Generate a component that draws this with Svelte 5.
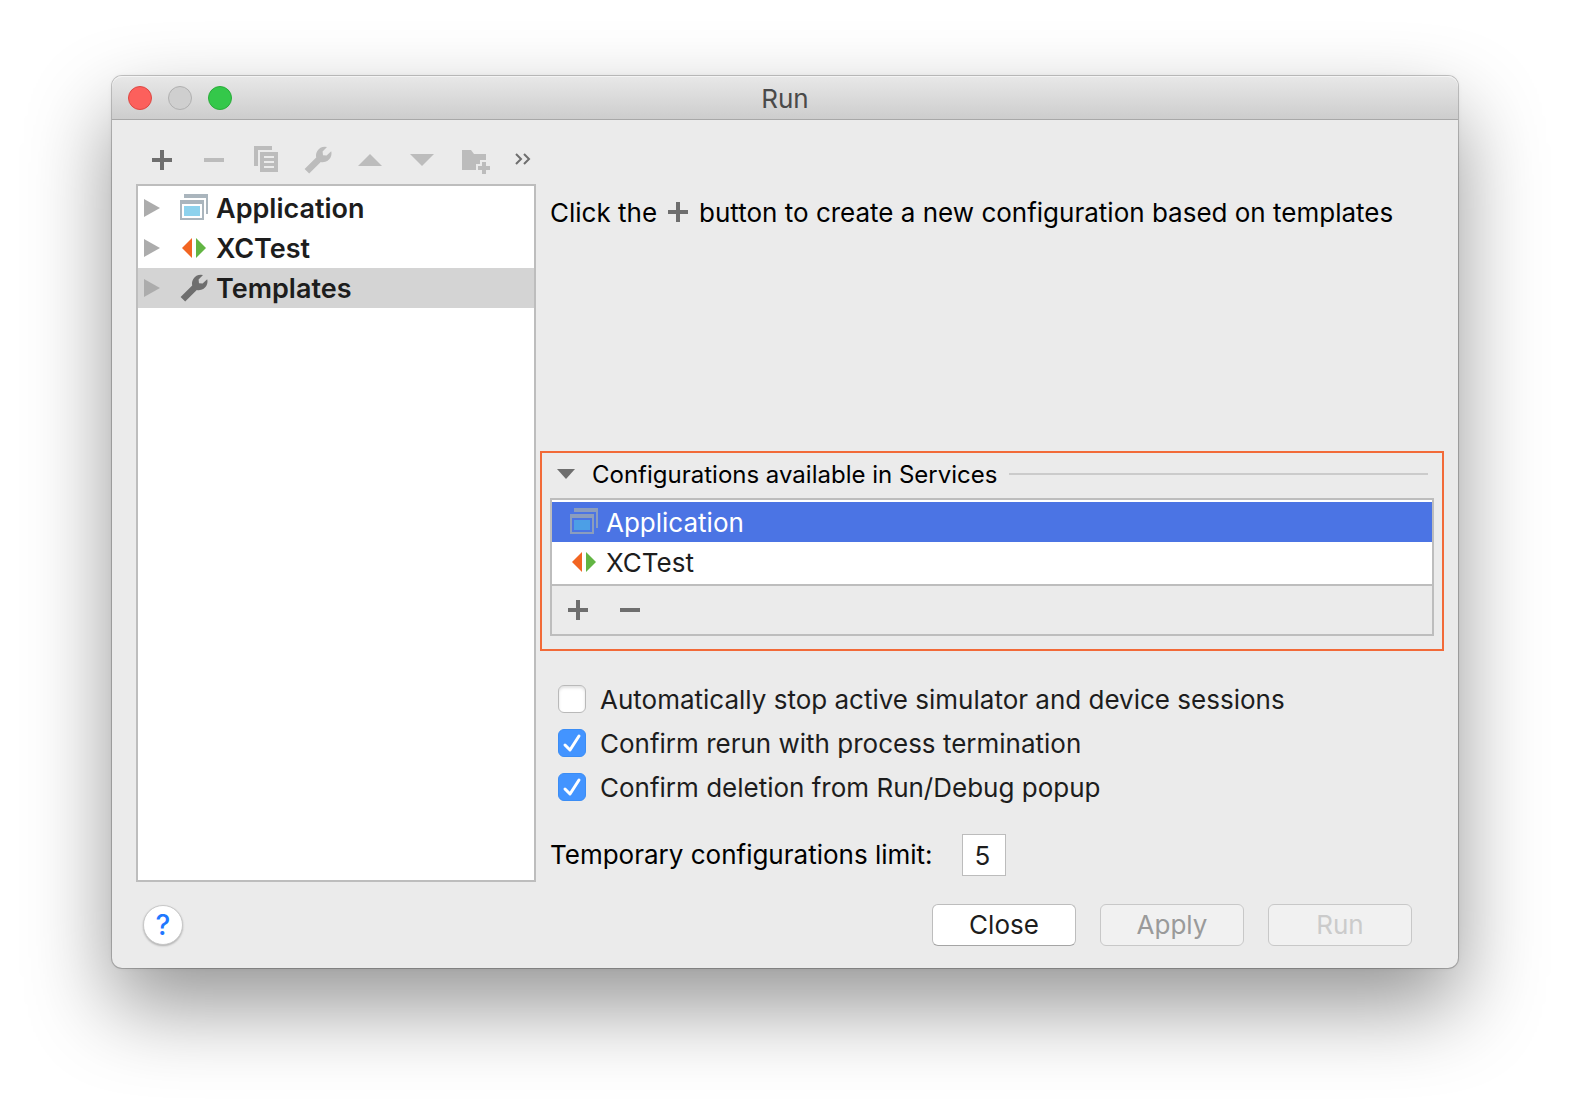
<script>
  let tree = $state([
    { name: 'Application', icon: 'app' },
    { name: 'XCTest', icon: 'test' },
    { name: 'Templates', icon: 'wrench' }
  ]);
  let selectedNode = $state('Templates');

  let services = $state([
    { name: 'Application', icon: 'app' },
    { name: 'XCTest', icon: 'test' }
  ]);
  let selectedService = $state('Application');

  let options = $state([
    { label: 'Automatically stop active simulator and device sessions', checked: false },
    { label: 'Confirm rerun with process termination', checked: true },
    { label: 'Confirm deletion from Run/Debug popup', checked: true }
  ]);
  let limit = $state('5');
</script>

{#snippet icon(name)}
  <svg class="icon" viewBox="0 0 32 32" aria-hidden="true">
    {#if name === 'plus'}
      <path d="M14 6h4v8h8v4h-8v8h-4v-8H6v-4h8z" />
    {:else if name === 'minus'}
      <path d="M6 14h20v4H6z" />
    {:else if name === 'copy'}
      <path d="M4 2h18v4H8v16H4z" />
      <path fill-rule="evenodd" d="M10 8h18v20H10zM14 12v2h10v-2zM14 17v2h10v-2zM14 22v2h10v-2z" />
    {:else if name === 'wrench'}
      <path d="M25 3 20.6 7.5 21 11.2 24.6 11.6 29.2 7.2A8.8 8.8 0 0 1 18.8 18L7.2 29.6 2.6 25 14.2 13.4A8.8 8.8 0 0 1 25 3z" />
    {:else if name === 'up'}
      <path d="M4 22 16 10l12 12z" />
    {:else if name === 'down'}
      <path d="M4 10h24L16 22z" />
    {:else if name === 'folder'}
      <path d="M4 6h9l3 4h12v6h-6v4h-4v6H4z" />
      <path d="M24 18h4v4h4v4h-4v4h-4v-4h-4v-4h4z" />
    {:else if name === 'more'}
      <path class="line" d="m6 10 5 5-5 5M14 10l5 5-5 5" />
    {:else if name === 'app'}
      <path class="frame" d="M6 2h24v20h-2V6H6z" />
      <path class="frame" fill-rule="evenodd" d="M2 8h24v20H2zM4 12v14h20V12z" />
      <path class="pane" d="M6 14h16v10H6z" />
    {:else if name === 'test'}
      <path fill="#f26522" d="M14 6v20L4 16z" />
      <path fill="#62b543" d="M18 6v20l10-10z" />
    {/if}
  </svg>
{/snippet}

<main>
  <section class="window" aria-label="Run">
    <header class="titlebar">
      <div class="lights">
        <button class="light close" aria-label="Close window"></button>
        <button class="light minimize" aria-label="Minimize window" disabled></button>
        <button class="light zoom" aria-label="Zoom window"></button>
      </div>
      <h1 class="text">Run</h1>
    </header>

    <div class="content">
      <div class="sidebar">
        <div class="toolbar">
          <button class="tool" aria-label="Add">{@render icon('plus')}</button>
          <button class="tool" aria-label="Remove" disabled>{@render icon('minus')}</button>
          <button class="tool" aria-label="Copy" disabled>{@render icon('copy')}</button>
          <button class="tool" aria-label="Edit templates" disabled>{@render icon('wrench')}</button>
          <button class="tool" aria-label="Move up" disabled>{@render icon('up')}</button>
          <button class="tool" aria-label="Move down" disabled>{@render icon('down')}</button>
          <button class="tool" aria-label="New folder" disabled>{@render icon('folder')}</button>
          <button class="tool" aria-label="More">{@render icon('more')}</button>
        </div>
        <div class="tree">
          {#each tree as node}
            <button
              class="node"
              class:selected={selectedNode === node.name}
              onclick={() => (selectedNode = node.name)}
            >
              <svg class="arrow" viewBox="0 0 16 18" aria-hidden="true"><path d="M0 0v18l16-9z" /></svg>
              {@render icon(node.icon)}
              <span class="text">{node.name}</span>
            </button>
          {/each}
        </div>
      </div>

      <div class="details">
        <p class="hint">
          <span class="text">Click the</span>
          {@render icon('plus')}
          <span class="text">button to create a new configuration based on templates</span>
        </p>

        <section class="services">
          <button class="services-head">
            <svg class="fold" viewBox="0 0 18 10" aria-hidden="true"><path d="M0 0h18l-9 10z" /></svg>
            <span class="text">Configurations available in Services</span>
            <span class="rule"></span>
          </button>
          <div class="panel">
            <div class="list">
              {#each services as item}
                <button
                  class="item"
                  class:selected={selectedService === item.name}
                  onclick={() => (selectedService = item.name)}
                >
                  {@render icon(item.icon)}
                  <span class="text">{item.name}</span>
                </button>
              {/each}
            </div>
            <div class="panel-tools">
              <button class="tool" aria-label="Add configuration type">{@render icon('plus')}</button>
              <button class="tool" aria-label="Remove configuration type">{@render icon('minus')}</button>
            </div>
          </div>
        </section>

        <div class="options">
          {#each options as option}
            <label class="option">
              <span class="box">
                <input type="checkbox" bind:checked={option.checked} />
                <svg viewBox="0 0 28 28" aria-hidden="true"><path d="m7 16 5 5L21 7" /></svg>
              </span>
              <span class="text">{option.label}</span>
            </label>
          {/each}
        </div>

        <div class="limit">
          <label for="limit">Temporary configurations limit:</label>
          <input id="limit" type="text" bind:value={limit} />
        </div>
      </div>
    </div>

    <footer>
      <button class="help" aria-label="Help">?</button>
      <div class="actions">
        <button class="action">Close</button>
        <button class="action" disabled>Apply</button>
        <button class="action default" disabled>Run</button>
      </div>
    </footer>
  </section>
</main>

<style>
  :global(body) {
    margin: 0;
    background: #fff;
  }

  main {
    box-sizing: border-box;
    display: flex;
    min-height: 100vh;
    padding: 76px 112px 148px;
    overflow: hidden;
    font: 26px/30px Inter, 'Liberation Sans', sans-serif;
    color: #000;
  }

  button,
  input {
    box-sizing: border-box;
    margin: 0;
    padding: 0;
    border: 0;
    background: none;
    font: inherit;
    color: inherit;
  }

  /* Labels sit slightly below the centre line of their row. */
  .text {
    padding-top: 2px;
  }

  .window {
    flex: 1;
    min-width: 0;
    display: flex;
    flex-direction: column;
    border-radius: 10px;
    background: #ebebeb;
    box-shadow:
      0 0 0 1px rgba(0, 0, 0, 0.2),
      0 0 4px rgba(0, 0, 0, 0.08),
      0 38px 84px rgba(0, 0, 0, 0.42);
  }

  .titlebar {
    box-sizing: border-box;
    height: 44px;
    display: grid;
    grid-template-columns: 1fr auto 1fr;
    align-items: center;
    padding: 0 16px;
    border-bottom: 1px solid #a8a8a8;
    border-radius: 10px 10px 0 0;
    background: linear-gradient(#e8e8e8, #cdcdcd);
    box-shadow: inset 0 1px #f4f4f4;
  }

  .lights {
    display: flex;
    gap: 16px;
  }

  .light {
    width: 24px;
    height: 24px;
    border: 1px solid #dd4843;
    border-radius: 50%;
    background: #fc605c;
  }

  .light.minimize {
    border-color: #b0b0b0;
    background: #cfcfcf;
  }

  .light.zoom {
    border-color: #2aac3a;
    background: #34c84a;
  }

  h1 {
    margin: 0;
    font-size: 26px;
    font-weight: 400;
    color: #4a4a4a;
  }

  .content {
    flex: 1;
    display: grid;
    grid-template-columns: 400px minmax(0, 1fr);
    gap: 4px;
    padding: 24px 14px 0 24px;
  }

  .sidebar {
    display: flex;
    flex-direction: column;
  }

  .toolbar {
    display: flex;
    gap: 20px;
    height: 40px;
    padding-left: 10px;
  }

  .tool {
    width: 32px;
    height: 32px;
    color: #6e6e6e;
  }

  .tool:disabled {
    color: #bcbcbc;
  }

  .icon {
    display: block;
    flex: none;
    width: 32px;
    height: 32px;
    fill: currentColor;
  }

  .line {
    fill: none;
    stroke: currentColor;
    stroke-width: 2;
  }

  .frame {
    fill: #aab5bd;
  }

  .pane {
    fill: #8dd2ed;
  }

  .tree {
    flex: 1;
    padding: 2px 0;
    border: 2px solid #bdbdbd;
    background: #fff;
  }

  .node {
    display: flex;
    align-items: center;
    width: 100%;
    height: 40px;
    padding-left: 6px;
    font-size: 27px;
    font-weight: 600;
    color: #1d1d1d;
  }

  .node .icon {
    margin: 0 6px 0 18px;
    color: #6e6e6e;
  }

  .node.selected {
    background: #d4d4d4;
  }

  .arrow {
    width: 16px;
    height: 18px;
    fill: #acacac;
  }

  .details {
    display: flex;
    flex-direction: column;
  }

  .hint {
    display: flex;
    align-items: center;
    gap: 5px;
    margin: 52px 0 auto;
    padding-left: 10px;
    white-space: nowrap;
  }

  .hint .icon {
    color: #6e6e6e;
  }

  .services {
    margin-bottom: 32px;
    padding: 0 8px 13px;
    border: 2px solid #f26a38;
  }

  .services-head {
    display: flex;
    align-items: center;
    width: 100%;
    height: 45px;
    padding: 0 6px 4px 7px;
    font-size: 24px;
  }

  .fold {
    width: 18px;
    height: 10px;
    margin-right: 17px;
    fill: #6e6e6e;
  }

  .rule {
    flex: 1;
    height: 2px;
    margin-left: 12px;
    background: #cbcbcb;
  }

  .panel {
    border: 2px solid #bdbdbd;
  }

  .list {
    padding: 2px 0;
    border-bottom: 2px solid #bdbdbd;
    background: #fff;
  }

  .item {
    display: flex;
    align-items: center;
    gap: 6px;
    width: 100%;
    height: 40px;
    padding-left: 16px;
    color: #1d1d1d;
  }

  .item.selected {
    background: #4b74e4;
    color: #fff;
  }

  .item.selected .frame {
    fill: #8b9dbd;
  }

  .item.selected .pane {
    fill: #4c9fe6;
  }

  .panel-tools {
    display: flex;
    gap: 20px;
    padding: 8px 10px;
  }

  .options {
    display: flex;
    flex-direction: column;
    gap: 12px;
    padding-left: 18px;
    color: #1d1d1d;
  }

  .option {
    display: flex;
    align-items: center;
    gap: 14px;
  }

  .box {
    display: grid;
    width: 28px;
    height: 28px;
  }

  .box input,
  .box svg {
    grid-area: 1 / 1;
    width: 28px;
    height: 28px;
  }

  .box input {
    appearance: none;
    border: 1px solid #b9b9b9;
    border-radius: 6px;
    background: #fff;
    box-shadow: inset 0 2px 3px rgba(0, 0, 0, 0.12);
  }

  .box input:checked {
    border-color: #3b8df5;
    background: #4394ff;
    box-shadow: none;
  }

  .box svg {
    visibility: hidden;
    pointer-events: none;
    fill: none;
    stroke: #fff;
    stroke-width: 3;
    stroke-linecap: round;
    stroke-linejoin: round;
  }

  .box input:checked + svg {
    visibility: visible;
  }

  .limit {
    display: flex;
    align-items: center;
    gap: 29px;
    padding: 31px 0 6px 10px;
  }

  .limit input {
    width: 44px;
    height: 42px;
    padding-left: 12px;
    border: 1px solid #bcbcbc;
    background: #fff;
    color: #1d1d1d;
  }

  footer {
    display: flex;
    align-items: center;
    justify-content: space-between;
    padding: 22px 46px 22px 31px;
  }

  .help {
    width: 40px;
    height: 40px;
    border: 1px solid #c8c8c8;
    border-radius: 50%;
    background: #fff;
    box-shadow: 0 1px 2px rgba(0, 0, 0, 0.25);
    font-size: 28px;
    font-weight: 500;
    color: #1f78ff;
  }

  .actions {
    display: flex;
    gap: 24px;
  }

  .action {
    width: 144px;
    height: 42px;
    border: 1px solid #bdbdbd;
    border-bottom-color: #a5a5a5;
    border-radius: 6px;
    background: #fff;
    color: #1d1d1d;
  }

  .action:disabled {
    border-color: #c8c8c8;
    background: #f1f1f1;
    color: #9a9a9a;
  }

  .action.default:disabled {
    color: #cbcbcb;
  }
</style>
